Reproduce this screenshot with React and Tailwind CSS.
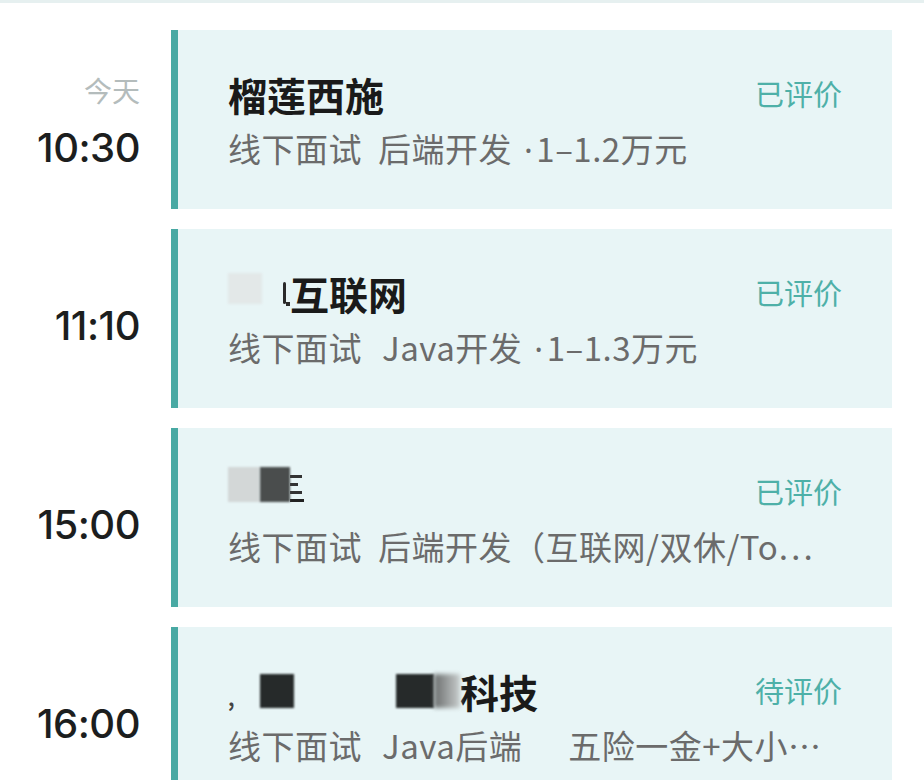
import React from 'react'

const Blur = ({ className }) => <span className={`inline-block blur-[1px] ${className}`} />

const Dot = () => <span className="font-['Noto_Sans',sans-serif] ml-[12px] mr-[3px]">·</span>

const rows = [
  {
    today: true,
    time: '10:30',
    title: <span>榴莲西施</span>,
    sub: (
      <>
        线下面试<span className="ml-[16px]">后端开发</span>
        <Dot />1–1.2万元
      </>
    ),
    status: '已评价',
  },
  {
    time: '11:10',
    title: (
      <>
        <Blur className="w-[34px] h-[31px] bg-[#e3e8e8] -mt-[10px]" />
        <span className="ml-[21px] inline-block w-[3px] h-[22px] bg-[#2a2a2a] rounded-sm" />
        <span className="inline-block w-[4px] h-[4px] bg-[#2a2a2a] mt-[22px]" />
        <span>互联网</span>
      </>
    ),
    sub: (
      <>
        线下面试<span className="ml-[20px]">Java开发</span>
        <Dot />1–1.3万元
      </>
    ),
    status: '已评价',
  },
  {
    time: '15:00',
    title: (
      <>
        <Blur className="w-[32px] h-[35px] bg-[#d3d7d7] -mt-[16px]" />
        <Blur className="w-[30px] h-[35px] bg-[#4a4d4d] -mt-[16px]" />
        <span className="inline-flex flex-col gap-[5px] -mt-[8px] w-[12px]">
          <span className="h-[3px] bg-[#333]" />
          <span className="h-[3px] bg-[#333] w-[8px]" />
          <span className="h-[3px] bg-[#333]" />
          <span className="h-[3px] bg-[#222] w-[14px]" />
        </span>
      </>
    ),
    sub: (
      <>
        线下面试<span className="ml-[16px]">后端开发（互联网/双休/To…</span>
      </>
    ),
    status: '已评价',
  },
  {
    time: '16:00',
    title: (
      <>
        <span className="text-[20px] mt-[14px] w-[32px] text-[#444]">,</span>
        <Blur className="w-[34px] h-[34px] bg-[#262a2a]" />
        <span className="w-[102px]" />
        <Blur className="w-[38px] h-[34px] bg-[#262a2a]" />
        <span className="inline-block w-[26px] h-[34px] blur-[2px] bg-gradient-to-r from-[#6d7070] to-[#c8cccc]" />
        <span>科技</span>
      </>
    ),
    sub: (
      <>
        线下面试<span className="ml-[20px]">Java后端</span>
        <span className="inline-block w-[46px]" />五险一金+大小…
      </>
    ),
    status: '待评价',
  },
]

export default function App() {
  return (
    <div className="w-[924px] h-[780px] overflow-hidden bg-white font-['Noto_Sans_CJK_SC','Noto_Sans',sans-serif]">
      <div className="h-[3px] bg-[#e6f0f0]" />
      <div className="pt-[27px] pr-[32px] flex flex-col gap-5">
        {rows.map((r, i) => (
          <div key={i} className="flex h-[179px] shrink-0">
            <div
              className={`w-[171px] shrink-0 pr-[31px] flex flex-col items-end justify-center ${r.today ? 'pt-[6px]' : 'pt-[15px]'}`}
            >
              {r.today && <div className="text-[28px] leading-[32px] text-[#b4bcbc]">今天</div>}
              <div
                className={`font-['Inter',sans-serif] font-medium text-[40px] leading-[46px] text-[#1c1e1e] tracking-[-0.5px] ${r.today ? 'mt-[19px]' : ''}`}
              >
                {r.time}
              </div>
            </div>
            <div className="flex-1 min-w-0 bg-[#e8f5f6] border-l-[7px] border-[#48a9a3] pl-[50px] pr-[50px] pt-[44px] flex">
              <div className="flex-1 min-w-0">
                <div className="h-[40px] flex items-center text-[39px] leading-[40px] font-bold text-[#1a1a1a]">
                  {r.title}
                </div>
                <div className="mt-[16px] text-[33px] leading-[36px] text-[#6b6b6b] whitespace-nowrap overflow-visible tracking-[0.5px]">
                  {r.sub}
                </div>
              </div>
              <div className="h-[40px] shrink-0 flex items-center text-[29px] text-[#4eb0a8]">{r.status}</div>
            </div>
          </div>
        ))}
      </div>
    </div>
  )
}
